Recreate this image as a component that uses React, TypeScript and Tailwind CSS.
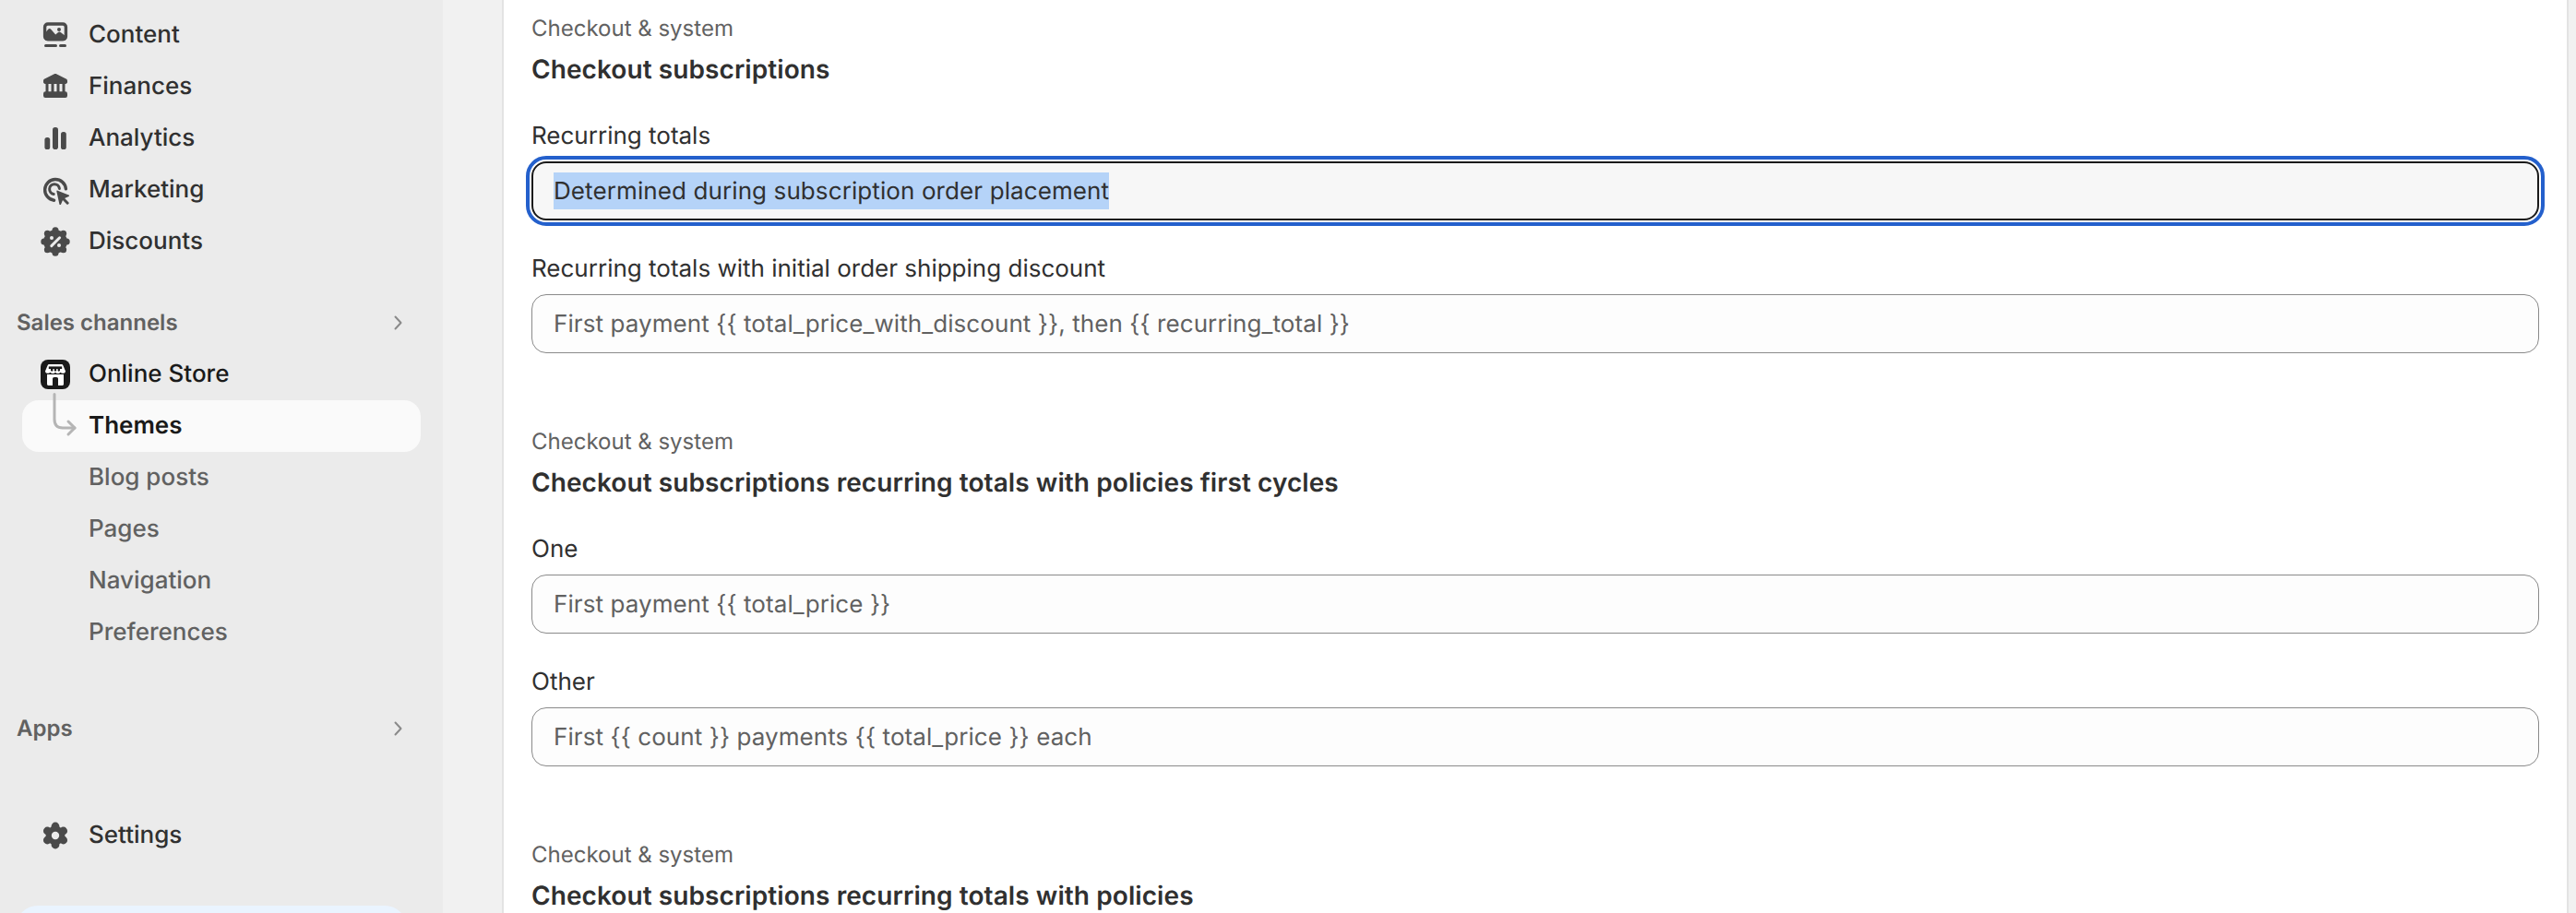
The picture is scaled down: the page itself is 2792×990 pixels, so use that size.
import React from "react";

const ICON = "#4a4a4a";

function IconContent() {
  return (
    <svg viewBox="0 0 20 20" className="w-10 h-10 shrink-0" fill={ICON}>
      <rect x="4.3" y="4" width="11.4" height="8.4" rx="1.6" fill="none" stroke={ICON} strokeWidth="1.7" />
      <path d="M4.2 9.2 6 7c.5-.6 1.2-.6 1.7 0l2.4 2.7 1.3-1.1c.5-.4 1.1-.4 1.6 0l2.8 2.1v1c0 .7-.6 1.3-1.3 1.3H5.5c-.7 0-1.3-.6-1.3-1.3Z" />
      <circle cx="12" cy="7" r="1" />
      <rect x="4" y="15" width="7" height="1.5" rx=".75" />
      <rect x="12" y="15" width="4" height="1.5" rx=".75" />
    </svg>
  );
}

function IconFinances() {
  return (
    <svg viewBox="0 0 20 20" className="w-10 h-10 shrink-0" fill={ICON}>
      <path d="M9.4 3.15c.4-.2.8-.2 1.2 0l5.2 2.6c.4.2.7.6.7 1.1v.7c0 .5-.4.95-.95.95H4.45c-.5 0-.95-.4-.95-.95v-.7c0-.5.3-.9.7-1.1Z" />
      <rect x="4.75" y="8" width="1.5" height="5" />
      <rect x="7.75" y="8" width="1.5" height="5" />
      <rect x="10.75" y="8" width="1.5" height="5" />
      <rect x="13.75" y="8" width="1.5" height="5" />
      <rect x="3.5" y="12.6" width="13" height="3.4" rx="1.1" />
    </svg>
  );
}

function IconAnalytics() {
  return (
    <svg viewBox="0 0 20 20" className="w-10 h-10 shrink-0" fill={ICON}>
      <rect x="4.2" y="9.5" width="2.9" height="6.5" rx="1.3" />
      <rect x="8.5" y="4" width="3" height="12" rx="1.4" />
      <rect x="13" y="6.5" width="2.9" height="9.5" rx="1.3" />
    </svg>
  );
}

function IconMarketing() {
  return (
    <svg viewBox="0 0 20 20" className="w-10 h-10 shrink-0" fill={ICON}>
      <path d="M9.3 15.6a5.7 5.7 0 1 1 6.4-6.2" fill="none" stroke={ICON} strokeWidth="1.7" strokeLinecap="round" />
      <path d="M9.1 12.2a2.7 2.7 0 1 1 3.1-3" fill="none" stroke={ICON} strokeWidth="1.5" strokeLinecap="round" />
      <path d="M10.7 10.9c-.15-.4.2-.7.55-.55l6 2.35c.4.15.4.7 0 .85l-2.2.95 2.2 2.2c.2.2.2.5 0 .7l-.35.35c-.2.2-.5.2-.7 0l-2.2-2.2-.95 2.2c-.15.4-.7.4-.85 0Z" />
    </svg>
  );
}

function IconDiscounts() {
  const lobes = [0, 45, 90, 135, 180, 225, 270, 315];
  return (
    <svg viewBox="0 0 20 20" className="w-10 h-10 shrink-0" fill={ICON}>
      <circle cx="10" cy="10" r="6.4" />
      {lobes.map((a) => (
        <circle
          key={a}
          cx={10 + 6.1 * Math.cos((a * Math.PI) / 180 - Math.PI / 2)}
          cy={10 + 6.1 * Math.sin((a * Math.PI) / 180 - Math.PI / 2)}
          r="1.75"
        />
      ))}
      <path d="M12.3 7.9 7.9 12.3" stroke="#ebebeb" strokeWidth="1.5" strokeLinecap="round" />
      <circle cx="8" cy="8" r="1" fill="#ebebeb" />
      <circle cx="12" cy="12" r="1" fill="#ebebeb" />
    </svg>
  );
}

function IconSettings() {
  const lobes = [0, 60, 120, 180, 240, 300];
  return (
    <svg viewBox="0 0 20 20" className="w-10 h-10 shrink-0" fill={ICON}>
      <circle cx="10" cy="10" r="5.2" />
      {lobes.map((a) => (
        <circle
          key={a}
          cx={10 + 5 * Math.cos((a * Math.PI) / 180 - Math.PI / 2)}
          cy={10 + 5 * Math.sin((a * Math.PI) / 180 - Math.PI / 2)}
          r="2.2"
        />
      ))}
      <circle cx="10" cy="10" r="2.1" fill="#ebebeb" />
    </svg>
  );
}

function IconStore() {
  return (
    <svg viewBox="0 0 32 32" className="w-8 h-8 shrink-0">
      <rect width="32" height="32" rx="8" fill="#1a1a1a" />
      <path d="M9.5 5h13c.9 0 1.6.5 1.9 1.3L27 12.5c0 2.4-3.8 3.2-5.5 1.2-1.3 1.8-4.2 1.8-5.5 0-1.3 1.8-4.2 1.8-5.5 0C8.800 15.700 5 14.900 5 12.500l2.600-6.200C7.900 5.500 8.600 5 9.500 5Z" fill="#fff" />
      <path d="M8.800 7.400h14.400v2.600H8.800Z" fill="#1a1a1a" />
      <path d="M11 10h2.400v1.600c0 1.500-2.400 1.500-2.400 0ZM14.800 10h2.400v1.600c0 1.500-2.400 1.500-2.400 0ZM18.600 10H21v1.600c0 1.500-2.400 1.500-2.400 0Z" fill="#1a1a1a" />
      <path d="M7 16h18v10.500c0 .8-.7 1.500-1.500 1.500h-15c-.8 0-1.500-.7-1.500-1.500Z" fill="#fff" />
      <path d="M13 28v-7.200c0-1 .8-1.800 1.800-1.800h2.400c1 0 1.800.8 1.800 1.800V28Z" fill="#1a1a1a" />
    </svg>
  );
}

function Chevron() {
  return (
    <svg viewBox="0 0 12 16" className="w-3 h-4 shrink-0" fill="none" stroke="#8a8a8a" strokeWidth="2" strokeLinecap="round" strokeLinejoin="round">
      <path d="M2.5 1.500 8.500 8l-6 6.500" />
    </svg>
  );
}

function NavRow({ icon, label }: { icon: React.ReactNode; label: string }) {
  return (
    <div className="h-14 flex items-center pl-10 text-[26px] font-[450] text-[#303030]">
      <span className="w-[56px] flex items-center">{icon}</span>
      <span className="mb-px">{label}</span>
    </div>
  );
}

function SectionHead({ label, className }: { label: string; className: string }) {
  return (
    <div className={`h-14 flex items-center justify-between pl-[18px] pr-[42px] text-[24px] font-semibold text-[#616161] ${className}`}>
      <span>{label}</span>
      <Chevron />
    </div>
  );
}

function SubRow({ label }: { label: string }) {
  return (
    <div className="h-14 flex items-center pl-24 text-[26px] font-[450] text-[#616161]">
      <span className="mb-px">{label}</span>
    </div>
  );
}

function Sidebar() {
  return (
    <aside className="w-[480px] shrink-0 h-full bg-[#ebebeb] pt-[10px]">
      <NavRow icon={<IconContent />} label="Content" />
      <NavRow icon={<IconFinances />} label="Finances" />
      <NavRow icon={<IconAnalytics />} label="Analytics" />
      <NavRow icon={<IconMarketing />} label="Marketing" />
      <NavRow icon={<IconDiscounts />} label="Discounts" />
      <SectionHead label="Sales channels" className="mt-8" />
      <div className="h-14 flex items-center pl-[44px] text-[26px] font-medium text-[#1a1a1a]">
        <span className="w-[52px] flex items-center">
          <IconStore />
        </span>
        <span className="mb-px">Online Store</span>
      </div>
      <div className="relative h-14 flex items-center ml-6 mr-6 pl-[72px] rounded-[18px] bg-[#fafafa] text-[26px] font-semibold text-[#1a1a1a]">
        <svg viewBox="0 0 30 48" className="absolute left-[32px] top-[-8px] w-[30px] h-12" fill="none" stroke="#b5b5b5" strokeWidth="3" strokeLinecap="round" strokeLinejoin="round">
          <path d="M3 1.500v27c0 6 3 9.500 9 9.500h13" />
          <path d="M18 31l7 7-7 7" />
        </svg>
        <span className="mb-px">Themes</span>
      </div>
      <SubRow label="Blog posts" />
      <SubRow label="Pages" />
      <SubRow label="Navigation" />
      <SubRow label="Preferences" />
      <SectionHead label="Apps" className="mt-12" />
      <div className="mt-[60px]">
        <NavRow icon={<IconSettings />} label="Settings" />
      </div>
      <div className="mt-12 ml-[17px] w-[424px] h-20 rounded-3xl bg-[#eaf4ff]" />
    </aside>
  );
}

function Field({ label, value }: { label: string; value: string }) {
  return (
    <div>
      <div className="h-8 leading-[35px] text-[26px] font-normal text-[#303030]">{label}</div>
      <div className="mt-[13px] h-16 flex items-center px-[23px] rounded-2xl border border-[#8a8a8a] bg-[#fdfdfd] text-[26px] tracking-[0.085px] text-[#616161]">
        {value}
      </div>
    </div>
  );
}

function FocusedField({ label, value }: { label: string; value: string }) {
  return (
    <div>
      <div className="h-8 leading-[35px] text-[26px] font-normal text-[#303030]">{label}</div>
      <div className="mt-[13px] h-16 flex items-center pl-[22px] pr-6 rounded-2xl border-2 border-[#1a1a1a] outline-4 outline-offset-2 outline-[#2460cc] bg-[#f7f7f7] text-[26px] tracking-[0.1px] text-[#303030]">
        <span className="h-10 leading-[41px] bg-[#b5d3f8]">{value}</span>
      </div>
    </div>
  );
}

function Heading({ title }: { title: string }) {
  return (
    <div>
      <div className="h-8 leading-[34px] text-[24px] text-[#616161]">Checkout &amp; system</div>
      <div className="mt-[11px] h-9 leading-9 text-[28px] font-semibold tracking-[0.08px] text-[#303030]">{title}</div>
    </div>
  );
}

export default function App() {
  return (
    <div className="flex w-[2792px] h-[990px] overflow-hidden bg-[#f1f1f1] font-['Inter',sans-serif] [text-rendering:geometricPrecision]">
      <Sidebar />
      <main className="flex-1 ml-16 mr-2 border-x-2 border-[#e3e3e3] bg-white pt-[14px] px-[30px]">
        <section className="h-[448px]">
          <Heading title="Checkout subscriptions" />
          <div className="mt-[37px] flex flex-col gap-[35px]">
            <FocusedField label="Recurring totals" value="Determined during subscription order placement" />
            <Field
              label="Recurring totals with initial order shipping discount"
              value="First payment {{ total_price_with_discount }}, then {{ recurring_total }}"
            />
          </div>
        </section>
        <section className="h-[448px]">
          <Heading title="Checkout subscriptions recurring totals with policies first cycles" />
          <div className="mt-[37px] flex flex-col gap-[35px]">
            <Field label="One" value="First payment {{ total_price }}" />
            <Field label="Other" value="First {{ count }} payments {{ total_price }} each" />
          </div>
        </section>
        <section>
          <Heading title="Checkout subscriptions recurring totals with policies" />
        </section>
      </main>
    </div>
  );
}
